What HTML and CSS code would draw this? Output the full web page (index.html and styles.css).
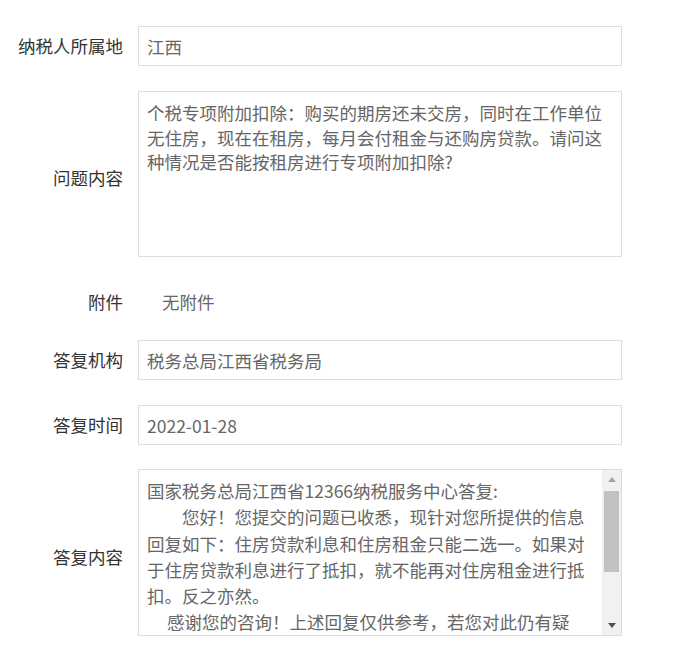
FILE: index.html
```html
<!DOCTYPE html>
<html lang="zh-CN">
<head>
    <meta charset="UTF-8">
    <meta name="viewport" content="width=device-width, initial-scale=1.0">
    <title>问题详情</title>
    <link rel="stylesheet" href="styles.css">
</head>
<body>
    <div class="form">
        <div class="row">
            <label class="label">纳税人所属地</label>
            <input class="input" type="text" value="江西" readonly>
        </div>
        <div class="row">
            <label class="label label-tall">问题内容</label>
            <textarea class="input textarea" readonly>个税专项附加扣除：购买的期房还未交房，同时在工作单位无住房，现在在租房，每月会付租金与还购房贷款。请问这种情况是否能按租房进行专项附加扣除?</textarea>
        </div>
        <div class="row row-plain">
            <label class="label">附件</label>
            <div class="plain-value">无附件</div>
        </div>
        <div class="row">
            <label class="label">答复机构</label>
            <input class="input" type="text" value="税务总局江西省税务局" readonly>
        </div>
        <div class="row row-tight">
            <label class="label">答复时间</label>
            <input class="input" type="text" value="2022-01-28" readonly>
        </div>
        <div class="row">
            <label class="label label-tall">答复内容</label>
            <div class="reply">
                <div class="reply-text">
                    <p>国家税务总局江西省12366纳税服务中心答复:</p>
                    <p class="indent-2">您好！您提交的问题已收悉，现针对您所提供的信息回复如下：住房贷款利息和住房租金只能二选一。如果对于住房贷款利息进行了抵扣，就不能再对住房租金进行抵扣。反之亦然。</p>
                    <p class="indent-1">感谢您的咨询！上述回复仅供参考，若您对此仍有疑问，可拨打12366纳税服务热线咨询。</p>
                </div>
                <div class="scrollbar">
                    <div class="sb-btn">
                        <svg width="8" height="5" viewBox="0 0 8 5"><path d="M0 5 L4 0 L8 5 Z" fill="#a3a3a3"/></svg>
                    </div>
                    <div class="sb-thumb"></div>
                    <div class="sb-track"></div>
                    <div class="sb-btn">
                        <svg width="8" height="5" viewBox="0 0 8 5"><path d="M0 0 L8 0 L4 5 Z" fill="#505050"/></svg>
                    </div>
                </div>
            </div>
        </div>
    </div>
</body>
</html>
```

FILE: styles.css
```css
body {
    margin: 0;
    font-family: "Microsoft YaHei", "Noto Sans CJK SC", sans-serif;
    font-size: 17.5px;
    color: #333;
    background: #fff;
}
.form {
    padding-top: 26px;
    width: 622px;
}
.row {
    display: flex;
    align-items: center;
    margin-bottom: 25px;
}
.row-tight {
    margin-bottom: 24px;
}
.label {
    flex: none;
    width: 123px;
    padding-right: 15px;
    text-align: right;
    line-height: 24px;
}
.label-tall {
    padding-top: 8px;
}
.input {
    box-sizing: border-box;
    width: 484px;
    height: 40px;
    margin: 0;
    padding: 0 8px;
    border: 1px solid #dcdcdc;
    border-radius: 0;
    font: inherit;
    color: #666;
    background: #fff;
    outline: none;
}
.textarea {
    display: block;
    height: 166px;
    padding: 9px 8px;
    line-height: 24.5px;
    resize: none;
    overflow: hidden;
}
.row-plain {
    padding-top: 8px;
    margin-bottom: 26px;
}
.plain-value {
    padding-left: 24px;
    line-height: 24px;
    color: #666;
}
.reply {
    box-sizing: border-box;
    display: flex;
    width: 484px;
    height: 167px;
    border: 1px solid #dcdcdc;
}
.reply-text {
    flex: 1;
    padding: 8px 8px 0;
    overflow: hidden;
    line-height: 26.25px;
    color: #666;
}
.reply-text p {
    margin: 0;
}
.indent-2 {
    text-indent: 35px;
}
.indent-1 {
    text-indent: 20px;
}
.scrollbar {
    flex: none;
    width: 19px;
    display: flex;
    flex-direction: column;
    background: #f1f1f1;
}
.sb-btn {
    height: 19px;
    display: flex;
    align-items: center;
    justify-content: center;
}
.sb-thumb {
    height: 81px;
    margin: 2px 2px 0;
    background: #c1c1c1;
}
.sb-track {
    flex: 1;
}
```
